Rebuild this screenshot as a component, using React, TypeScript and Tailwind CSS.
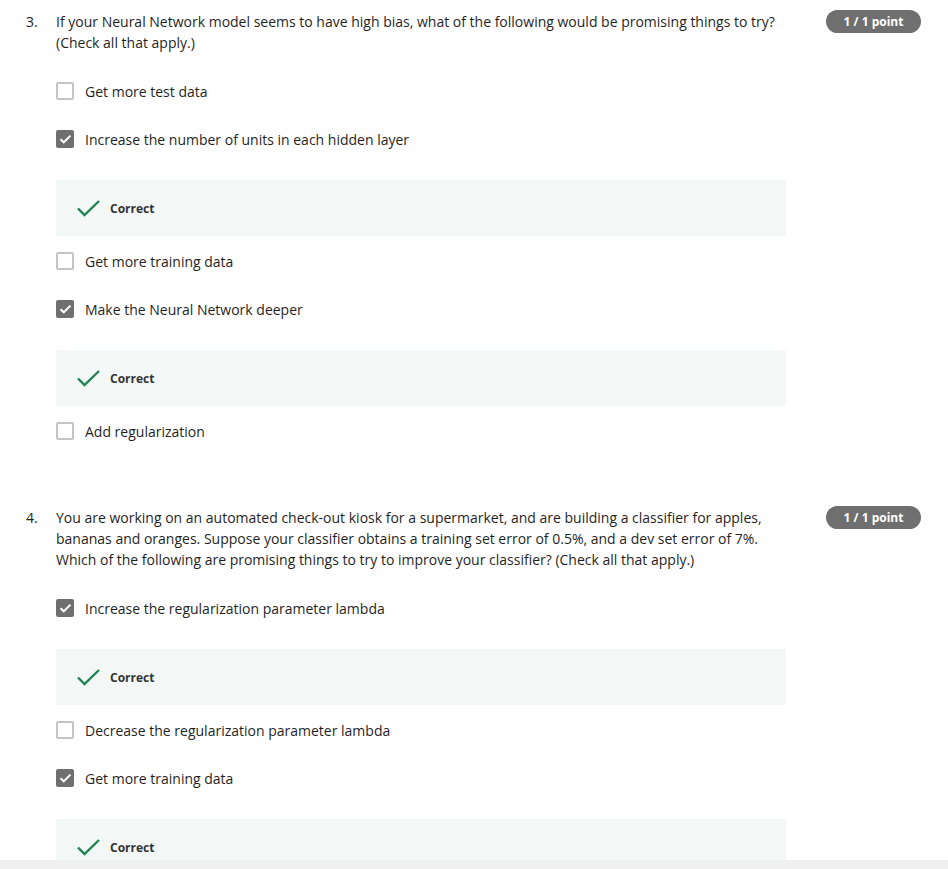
import React from "react";

type Option = { label: string; checked: boolean; correct?: boolean };

const questions: { num: number; lines: string; options: Option[] }[] = [
  {
    num: 3,
    lines:
      "If your Neural Network model seems to have high bias, what of the following would be promising things to try? (Check all that apply.)",
    options: [
      { label: "Get more test data", checked: false },
      { label: "Increase the number of units in each hidden layer", checked: true, correct: true },
      { label: "Get more training data", checked: false },
      { label: "Make the Neural Network deeper", checked: true, correct: true },
      { label: "Add regularization", checked: false },
    ],
  },
  {
    num: 4,
    lines:
      "You are working on an automated check-out kiosk for a supermarket, and are building a classifier for apples, bananas and oranges. Suppose your classifier obtains a training set error of 0.5%, and a dev set error of 7%. Which of the following are promising things to try to improve your classifier? (Check all that apply.)",
    options: [
      { label: "Increase the regularization parameter lambda", checked: true, correct: true },
      { label: "Decrease the regularization parameter lambda", checked: false },
      { label: "Get more training data", checked: true, correct: true },
    ],
  },
];

function Checkbox({ checked }: { checked: boolean }) {
  if (checked) {
    return (
      <span className="flex h-[18px] w-[18px] shrink-0 items-center justify-center rounded-[2px] bg-[#6f6f6f]">
        <svg width="13" height="10" viewBox="0 0 13 10" fill="none">
          <path d="M1.5 5.2 L4.8 8.3 L11.5 1.6" stroke="#fff" strokeWidth="2" />
        </svg>
      </span>
    );
  }
  return <span className="h-[18px] w-[18px] shrink-0 rounded-[2px] border-2 border-[#c4c4c4] bg-white" />;
}

function Feedback() {
  return (
    <div className="mt-[29px] mb-[13px] flex h-[56px] w-[730px] items-center bg-[#f3f8f6] pl-[21px]">
      <svg width="23" height="17" viewBox="0 0 23 17" fill="none">
        <path d="M1 8.5 L7.5 15 L22 1" stroke="#1f8354" strokeWidth="2.4" />
      </svg>
      <span className="ml-[10px] text-[12px] font-bold text-[#333]">Correct</span>
    </div>
  );
}

export default function App() {
  return (
    <div className="flex h-screen flex-col bg-white text-[14px] leading-[21px] text-[#1f1f1f] [font-family:'Open_Sans',sans-serif]">
      <div className="flex-1 overflow-hidden">
        {questions.map((q, qi) => (
          <div key={q.num} className={qi === 0 ? "pt-[11px]" : "mt-[64px]"}>
            <div className="flex">
              <span className="w-[56px] shrink-0 pl-[26px]">{q.num}.</span>
              <p className="w-[730px]">{q.lines}</p>
              <div className="ml-[40px] flex h-[21px] items-center">
                <span className="flex h-[23px] w-[95px] items-center justify-center rounded-full bg-[#6f6f6f] text-[12px] font-bold text-white">
                  1 / 1 point
                </span>
              </div>
            </div>
            <div className="mt-[26px] pl-[56px]">
              {q.options.map((o, i) => {
                const prevCorrect = i > 0 && q.options[i - 1].correct;
                return (
                  <div key={o.label} className={i === 0 || prevCorrect ? "" : "mt-6"}>
                    <label className="flex h-6 items-center gap-[11px]">
                      <Checkbox checked={o.checked} />
                      <span>{o.label}</span>
                    </label>
                    {o.correct && <Feedback />}
                  </div>
                );
              })}
            </div>
          </div>
        ))}
      </div>
      <div className="h-[9px] shrink-0 bg-[#f0f0f0]" />
    </div>
  );
}
